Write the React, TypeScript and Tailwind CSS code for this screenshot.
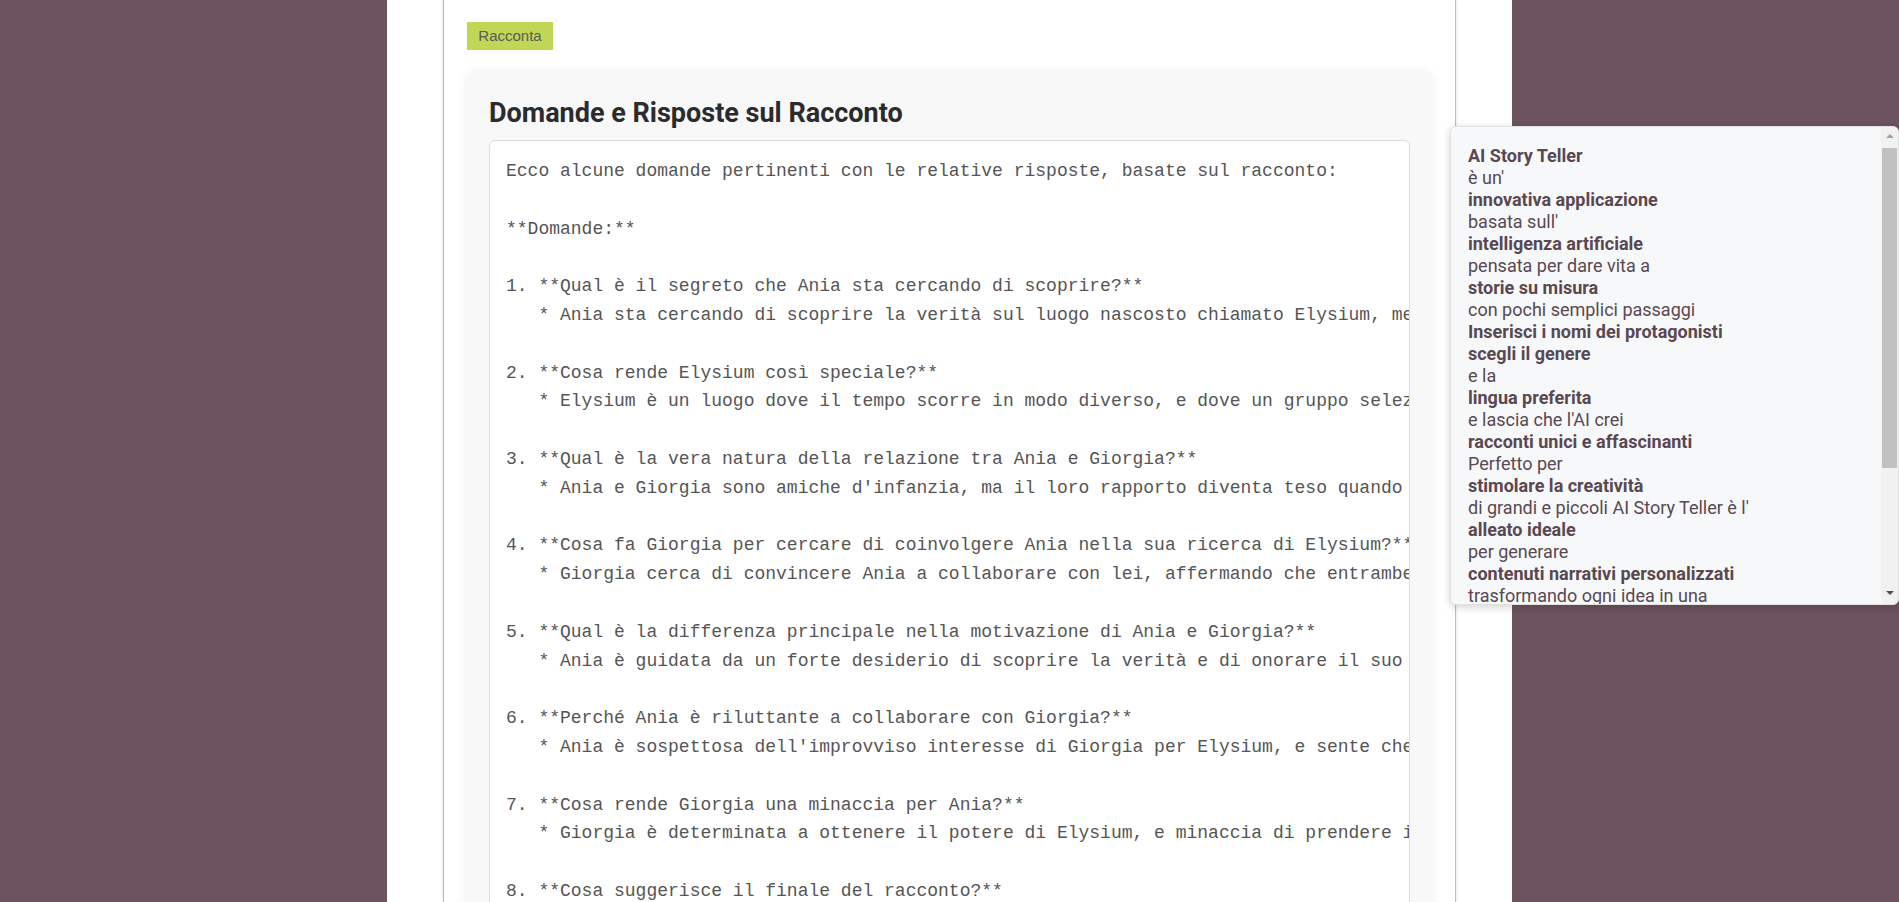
import React from 'react';

const storyAnswers = [
  'Ecco alcune domande pertinenti con le relative risposte, basate sul racconto:',
  '',
  '**Domande:**',
  '',
  '1. **Qual è il segreto che Ania sta cercando di scoprire?**',
  '   * Ania sta cercando di scoprire la verità sul luogo nascosto chiamato Elysium, menzionato nel diario di suo nonno.',
  '',
  '2. **Cosa rende Elysium così speciale?**',
  '   * Elysium è un luogo dove il tempo scorre in modo diverso, e dove un gruppo selezionato di persone custodisce un antico potere.',
  '',
  '3. **Qual è la vera natura della relazione tra Ania e Giorgia?**',
  '   * Ania e Giorgia sono amiche d\'infanzia, ma il loro rapporto diventa teso quando Giorgia mostra interesse per Elysium.',
  '',
  '4. **Cosa fa Giorgia per cercare di coinvolgere Ania nella sua ricerca di Elysium?**',
  '   * Giorgia cerca di convincere Ania a collaborare con lei, affermando che entrambe hanno diritto a conoscere la verità.',
  '',
  '5. **Qual è la differenza principale nella motivazione di Ania e Giorgia?**',
  '   * Ania è guidata da un forte desiderio di scoprire la verità e di onorare il suo nonno, mentre Giorgia cerca il potere.',
  '',
  '6. **Perché Ania è riluttante a collaborare con Giorgia?**',
  '   * Ania è sospettosa dell\'improvviso interesse di Giorgia per Elysium, e sente che l\'amica le nasconde qualcosa.',
  '',
  '7. **Cosa rende Giorgia una minaccia per Ania?**',
  '   * Giorgia è determinata a ottenere il potere di Elysium, e minaccia di prendere il diario con la forza.',
  '',
  '8. **Cosa suggerisce il finale del racconto?**',
  '   * Il finale suggerisce che il viaggio verso Elysium è solo all\'inizio, e che Ania dovrà affrontare nuove prove.',
  '',
].join('\n');

const aboutLines: [string, boolean][] = [
  ['AI Story Teller', true],
  ["è un'", false],
  ['innovativa applicazione', true],
  ["basata sull'", false],
  ['intelligenza artificiale', true],
  ['pensata per dare vita a', false],
  ['storie su misura', true],
  ['con pochi semplici passaggi', false],
  ['Inserisci i nomi dei protagonisti', true],
  ['scegli il genere', true],
  ['e la', false],
  ['lingua preferita', true],
  ["e lascia che l'AI crei", false],
  ['racconti unici e affascinanti', true],
  ['Perfetto per', false],
  ['stimolare la creatività', true],
  ["di grandi e piccoli AI Story Teller è l'", false],
  ['alleato ideale', true],
  ['per generare', false],
  ['contenuti narrativi personalizzati', true],
  ['trasformando ogni idea in una', false],
  ['storia coinvolgente e originale', true],
];

const AboutPopup = () => (
  <div className="absolute left-[1450px] top-[126px] w-[449px] h-[479px] bg-[#f7f8fa] border border-[#e2e2e2] rounded-md shadow-[0_2px_8px_rgba(0,0,0,0.18)] overflow-hidden flex">
    <div className="flex-1 overflow-hidden pl-[17px] pt-[18px] font-['Roboto'] text-[18px] leading-[22px] text-[#594851]">
      {aboutLines.map(([text, bold], i) => (
        <div key={i} className={bold ? 'font-bold' : 'font-normal'}>
          {text}
        </div>
      ))}
    </div>
    {/* scrollbar */}
    <div className="w-[17px] bg-[#f1f1f1] flex flex-col items-center">
      <div className="h-[17px] flex items-center justify-center">
        <div className="w-0 h-0 border-x-[4px] border-x-transparent border-b-[4px] border-b-[#a3a3a3]" />
      </div>
      <div className="w-[15px] h-[320px] mt-[4px] bg-[#c1c1c1]" />
      <div className="flex-1" />
      <div className="h-[17px] flex items-center justify-center mb-[3px]">
        <div className="w-0 h-0 border-x-[4px] border-x-transparent border-t-[4px] border-t-[#505050]" />
      </div>
    </div>
  </div>
);

const App = () => {
  return (
    <div className="h-screen overflow-hidden bg-[#6c535d] relative">
      <div className="w-[1125px] h-full mx-auto bg-white">
        <div className="mx-[56px] h-full bg-white border-x border-[#c4bcae] shadow-[0_0_3px_rgba(0,0,0,0.15)] pt-[22px]">
          <button className="ml-[23px] w-[86px] h-[28px] bg-[#c0d655] text-[#5a5a5a] text-[15px] font-['Liberation_Sans',Arial,sans-serif]">
            Racconta
          </button>

          <div className="mx-[23px] mt-[22px] bg-[#f8f8f8] rounded-lg shadow-[0_0_12px_rgba(0,0,0,0.07)] px-[22px] pt-[25px] pb-6">
            <h2 className="font-['Roboto',sans-serif] font-bold text-[27px] leading-[32px] text-[#2b2b2b] mb-[11px]">
              Domande e Risposte sul Racconto
            </h2>
            <div className="bg-white border border-[#dddddd] rounded-md p-4 overflow-hidden">
              <pre className="whitespace-pre font-['Courier_New','Liberation_Mono',monospace] text-[18px] leading-[28.8px] text-[#555555]">
                {storyAnswers}
              </pre>
            </div>
          </div>
        </div>
      </div>
      <AboutPopup />
    </div>
  );
};

export default App;
